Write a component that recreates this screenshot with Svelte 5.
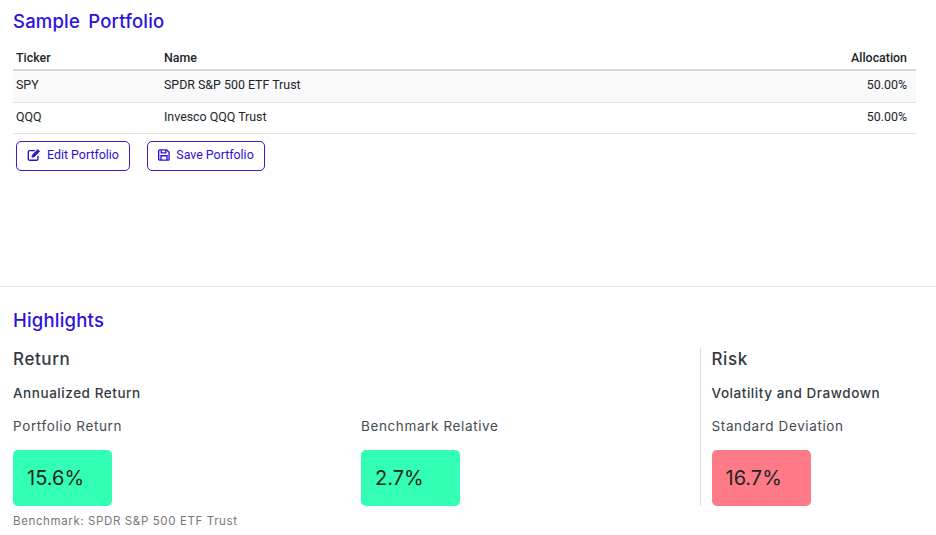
<script>
  const rows = [
    { ticker: 'SPY', name: 'SPDR S&P 500 ETF Trust', allocation: '50.00%' },
    { ticker: 'QQQ', name: 'Invesco QQQ Trust', allocation: '50.00%' }
  ];

  const metrics = [
    { label: 'Portfolio Return', value: '15.6%', tone: 'good' },
    { label: 'Benchmark Relative', value: '2.7%', tone: 'good' }
  ];
</script>

<div class="page">
  <section class="portfolio">
    <h2>Sample Portfolio</h2>
    <table>
      <thead>
        <tr>
          <th class="ticker">Ticker</th>
          <th>Name</th>
          <th class="right">Allocation</th>
        </tr>
      </thead>
      <tbody>
        {#each rows as row}
          <tr>
            <td>{row.ticker}</td>
            <td>{row.name}</td>
            <td class="right">{row.allocation}</td>
          </tr>
        {/each}
      </tbody>
    </table>
    <div class="actions">
      <button class="edit">
        <svg viewBox="0 0 16 16" width="14" height="14" fill="none" stroke="currentColor" stroke-width="1.6">
          <path d="M9 3H3a1.5 1.5 0 0 0-1.5 1.5v8A1.5 1.5 0 0 0 3 14h8a1.5 1.5 0 0 0 1.5-1.5V9" />
          <path d="M5.6 10.6l.5-2.6L12.4 1.7l2.1 2.1L8.2 10.1z" fill="currentColor" stroke-width="0.8" />
        </svg>
        Edit Portfolio
      </button>
      <button class="save">
        <svg viewBox="0 0 16 16" width="12" height="12" fill="none" stroke="currentColor" stroke-width="1.8">
          <path d="M2.2 1.2h9.3l3.3 3.3v9a1.3 1.3 0 0 1-1.3 1.3H2.2a1.3 1.3 0 0 1-1.3-1.3v-11a1.3 1.3 0 0 1 1.3-1.3z" />
          <path d="M4.4 1.5v3.6h6V1.5" />
          <path d="M4 14.5V9h8v5.5" />
        </svg>
        Save Portfolio
      </button>
    </div>
  </section>

  <section class="highlights">
    <h2>Highlights</h2>
    <div class="columns">
      <div class="return">
        <h3>Return</h3>
        <h4>Annualized Return</h4>
        <div class="metrics">
          {#each metrics as m}
            <div class="metric">
              <div class="label">{m.label}</div>
              <div class="box {m.tone}">{m.value}</div>
            </div>
          {/each}
        </div>
      </div>
      <div class="risk">
        <h3>Risk</h3>
        <h4>Volatility and Drawdown</h4>
        <div class="metric">
          <div class="label">Standard Deviation</div>
          <div class="box bad">16.7%</div>
        </div>
      </div>
    </div>
    <p class="note">Benchmark: SPDR S&amp;P 500 ETF Trust</p>
  </section>
</div>

<style>
  :global(body) {
    margin: 0;
    background: #fff;
  }

  .page {
    width: 936px;
    height: 535px;
    overflow: hidden;
    font-family: Inter, "Open Sans", sans-serif;
    color: #343a40;
  }

  .portfolio {
    height: 287px;
    padding: 10px 20px 0 13px;
    box-sizing: border-box;
    border-bottom: 1px solid #e6e6e6;
  }

  h2 {
    margin: 0;
    font-size: 18.5px;
    line-height: 22px;
    font-weight: 500;
    letter-spacing: 0.2px;
    word-spacing: 3px;
    color: #2a12e0;
  }

  table {
    width: 903px;
    margin-top: 14px;
    border-collapse: collapse;
    table-layout: fixed;
    font-family: Roboto, sans-serif;
    font-size: 12.4px;
    color: #212529;
  }

  th {
    text-align: left;
    font-weight: 500;
    height: 23px;
    padding: 0 3px;
    border-bottom: 2px solid #d8d8d8;
  }

  th.ticker {
    width: 142px;
  }

  th.right,
  td.right {
    text-align: right;
    width: 300px;
    padding-right: 9px;
  }

  td {
    height: 31px;
    padding: 0 3px 2px;
    box-sizing: border-box;
    border-bottom: 1px solid #e3e3e3;
  }

  tbody tr:first-child td {
    height: 32px;
    padding-bottom: 3px;
  }

  tbody tr:first-child {
    background: #f9f9f9;
  }

  .actions {
    display: flex;
    gap: 17px;
    padding: 7px 0 0 3px;
  }

  button {
    display: flex;
    align-items: center;
    justify-content: center;
    gap: 6px;
    height: 30px;
    box-sizing: border-box;
    border: 1px solid #3520cc;
    border-radius: 5px;
    background: #fff;
    color: #2a12d0;
    font-family: Roboto, sans-serif;
    font-size: 12.4px;
    padding: 0 0 2px;
  }

  .edit {
    width: 114px;
  }

  .save {
    width: 118px;
  }

  .highlights {
    padding: 22px 0 0 13px;
  }

  .columns {
    display: flex;
    margin-top: 17px;
  }

  .return {
    flex: 0 0 687px;
  }

  .risk {
    border-left: 1px solid #dedede;
    padding-left: 10.5px;
  }

  h3 {
    margin: 0;
    font-size: 17px;
    line-height: 22px;
    font-weight: 500;
    letter-spacing: 0.6px;
  }

  h4 {
    margin: 12px 0 0;
    font-size: 13.5px;
    line-height: 22px;
    font-weight: 500;
    letter-spacing: 0.55px;
  }

  .metrics {
    display: grid;
    grid-template-columns: 348px 1fr;
  }

  .label {
    margin-top: 11px;
    font-size: 13.5px;
    line-height: 22px;
    font-weight: 400;
    letter-spacing: 0.62px;
    color: #454b50;
  }

  .box {
    margin-top: 13px;
    width: 99px;
    height: 56px;
    box-sizing: border-box;
    padding-left: 14px;
    display: flex;
    align-items: center;
    border-radius: 5px;
    font-size: 20px;
    color: #212529;
  }

  .good {
    background: #33ffb4;
  }

  .bad {
    background: #ff7a87;
  }

  .note {
    margin: 8px 0 0;
    font-size: 11.5px;
    line-height: 14px;
    letter-spacing: 0.62px;
    color: #777;
  }
</style>
